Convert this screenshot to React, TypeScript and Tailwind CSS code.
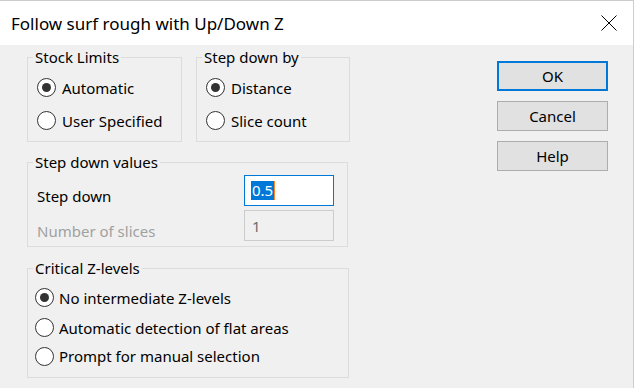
import React from 'react';

const ui = "font-['Noto_Sans',sans-serif] text-[15px] leading-[20px] text-black";

function Radio({ checked }: { checked?: boolean }) {
  return (
    <span className="w-[19px] h-[19px] rounded-full border-[1.5px] border-[#333333] bg-white flex items-center justify-center shrink-0">
      {checked && <span className="w-[9px] h-[9px] rounded-full bg-[#333333]" />}
    </span>
  );
}

interface GroupProps {
  title: string;
  className?: string;
  children: React.ReactNode;
}

function Group({ title, className, children }: GroupProps) {
  return (
    <fieldset className={`border border-[#dcdcdc] min-w-0 ${className || ''}`}>
      <legend className="ml-[5px] px-[2px] leading-[20px]">{title}</legend>
      {children}
    </fieldset>
  );
}

function Option({ label, checked, className }: { label: string; checked?: boolean; className?: string }) {
  return (
    <div className={`flex items-center ${className || ''}`}>
      <Radio checked={checked} />
      <span>{label}</span>
    </div>
  );
}

function Button({ label, primary }: { label: string; primary?: boolean }) {
  return (
    <button
      className={`w-[111px] h-[30px] bg-[#e1e1e1] flex items-center justify-center ${
        primary ? 'border-2 border-[#0078d7]' : 'border border-[#adadad]'
      }`}
    >
      {label}
    </button>
  );
}

export default function App() {
  return (
    <div className={`w-[634px] h-[388px] bg-[#f0f0f0] ${ui} border-t border-r border-[#cccccc] flex flex-col`}>
      {/* title bar */}
      <div className="h-[44px] bg-white flex items-center justify-between pl-[11px] pr-[16px] shrink-0">
        <span className="text-[17px] leading-[24px] pt-[1px]">Follow surf rough with Up/Down Z</span>
        <svg width="16" height="16" viewBox="0 0 16 16" className="mt-[-1px]">
          <path d="M0.5 0.5 L15.5 15.5 M15.5 0.5 L0.5 15.5" stroke="#000" strokeWidth="1" fill="none" />
        </svg>
      </div>

      <div className="flex pl-[27px] pt-[2px]">
        {/* left column */}
        <div className="flex flex-col w-[323px]">
          <div className="flex gap-[14px]">
            <Group title="Stock Limits" className="w-[155px]">
              <div className="pt-[4px] pb-[4px] pl-[9px]">
                <Option label="Automatic" checked className="h-[33px] gap-[6px]" />
                <Option label="User Specified" className="h-[33px] gap-[6px]" />
              </div>
            </Group>
            <Group title="Step down by" className="w-[154px]">
              <div className="pt-[4px] pb-[4px] pl-[9px]">
                <Option label="Distance" checked className="h-[33px] gap-[6px]" />
                <Option label="Slice count" className="h-[33px] gap-[6px]" />
              </div>
            </Group>
          </div>

          <Group title="Step down values" className="w-[321px] mt-[10px]">
            <div className="pt-[3px] pb-[5px] pl-[9px] flex flex-col gap-[4px]">
              <div className="flex items-end">
                <span className="w-[207px]">Step down</span>
                <div className="w-[90px] h-[31px] border border-[#0078d7] bg-white flex items-center pl-[6px]">
                  <span className="bg-[#0078d7] text-white leading-[19px] px-[1px]">0.5</span>
                  <span className="w-[1px] h-[19px] bg-[#ff8728]" />
                </div>
              </div>
              <div className="flex items-end">
                <span className="w-[207px] text-[#a0a0a0]">Number of slices</span>
                <div className="w-[90px] h-[31px] border border-[#cccccc] bg-[#f0f0f0] flex items-center pl-[7px] text-[#6d6d6d]">
                  1
                </div>
              </div>
            </div>
          </Group>

          <Group title="Critical Z-levels" className="w-[322px] mt-[11px]">
            <div className="pt-[4px] pb-[7px] pl-[7px]">
              <Option label="No intermediate Z-levels" checked className="h-[31px] gap-[5px]" />
              <Option label="Automatic detection of flat areas" className="h-[29px] gap-[5px]" />
              <Option label="Prompt for manual selection" className="h-[28px] gap-[5px]" />
            </div>
          </Group>
        </div>

        {/* buttons */}
        <div className="flex flex-col gap-[10px] ml-[147px] mt-[14px]">
          <Button label="OK" primary />
          <Button label="Cancel" />
          <Button label="Help" />
        </div>
      </div>
    </div>
  );
}
